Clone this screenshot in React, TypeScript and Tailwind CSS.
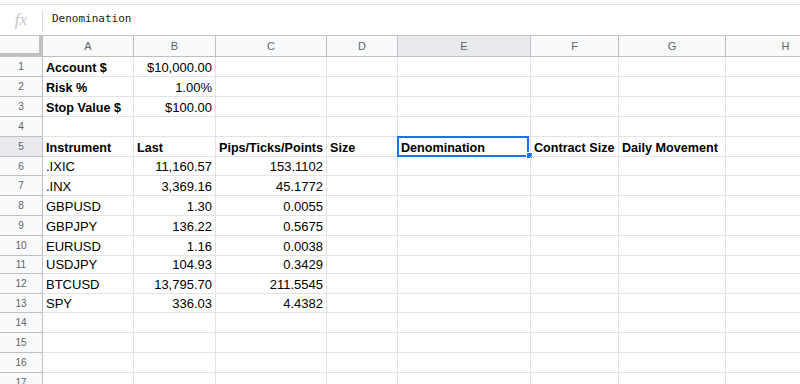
import React from "react";

const cols = [
  { key: "A", w: "w-[91px]" },
  { key: "B", w: "w-[82px]" },
  { key: "C", w: "w-[111px]" },
  { key: "D", w: "w-[71px]" },
  { key: "E", w: "w-[133px]" },
  { key: "F", w: "w-[88px]" },
  { key: "G", w: "w-[107px]" },
  { key: "H", w: "w-[120px]" },
];

type Cell = { v: string; bold?: boolean; right?: boolean };

const data: Record<number, Cell[]> = {
  1: [{ v: "Account $", bold: true }, { v: "$10,000.00", right: true }],
  2: [{ v: "Risk %", bold: true }, { v: "1.00%", right: true }],
  3: [{ v: "Stop Value $", bold: true }, { v: "$100.00", right: true }],
  5: [
    { v: "Instrument", bold: true },
    { v: "Last", bold: true },
    { v: "Pips/Ticks/Points", bold: true },
    { v: "Size", bold: true },
    { v: "Denomination", bold: true },
    { v: "Contract Size", bold: true },
    { v: "Daily Movement", bold: true },
  ],
  6: [{ v: ".IXIC" }, { v: "11,160.57", right: true }, { v: "153.1102", right: true }],
  7: [{ v: ".INX" }, { v: "3,369.16", right: true }, { v: "45.1772", right: true }],
  8: [{ v: "GBPUSD" }, { v: "1.30", right: true }, { v: "0.0055", right: true }],
  9: [{ v: "GBPJPY" }, { v: "136.22", right: true }, { v: "0.5675", right: true }],
  10: [{ v: "EURUSD" }, { v: "1.16", right: true }, { v: "0.0038", right: true }],
  11: [{ v: "USDJPY" }, { v: "104.93", right: true }, { v: "0.3429", right: true }],
  12: [{ v: "BTCUSD" }, { v: "13,795.70", right: true }, { v: "211.5545", right: true }],
  13: [{ v: "SPY" }, { v: "336.03", right: true }, { v: "4.4382", right: true }],
};

// row heights incl. bottom gridline
const heights: Record<number, string> = {
  6: "h-[19px]",
  11: "h-[18px]",
  13: "h-[19px]",
};

export default function App() {
  const rows = Array.from({ length: 18 }, (_, i) => i + 1);

  return (
    <div className="w-[800px] h-[384px] overflow-hidden bg-white font-['Liberation_Sans',Arial,sans-serif] text-black">
      {/* formula bar */}
      <div className="h-[35px] pt-[4px]">
        <div className="h-[31px] border-t border-[#e3e3e3] flex items-center">
          <div className="w-[42px] flex justify-center">
            <span className="font-['Liberation_Serif',serif] italic text-[17px] leading-none text-[#c4c4c4] -mt-[2px]">fx</span>
          </div>
          <div className="w-px h-[21px] bg-[#dadce0]" />
          <div className="pl-[9px] font-['DejaVu_Sans_Mono',monospace] text-[11px] text-[#222] -mt-[1px]">Denomination</div>
        </div>
      </div>

      {/* column headers */}
      <div className="flex h-[22px] border-t border-[#c0c0c0] bg-[#f8f9fa]">
        <div className="w-[43px] shrink-0 border-r-4 border-b-4 border-[#c0c0c0] bg-[#f8f9fa]" />
        {cols.map((c) => (
          <div
            key={c.key}
            className={`${c.w} shrink-0 border-r border-b border-[#c0c0c0] flex items-center justify-center text-[11px] text-[#5f6368] ${c.key === "E" ? "bg-[#e8eaed]" : ""}`}
          >
            {c.key}
          </div>
        ))}
      </div>

      {/* grid */}
      {rows.map((r) => {
        const cells = data[r] || [];
        return (
          <div key={r} className={`flex ${heights[r] || "h-[20px]"}`}>
            <div
              className={`w-[43px] shrink-0 border-r border-b border-[#c0c0c0] flex items-center justify-center text-[10px] text-[#5f6368] ${r === 5 ? "bg-[#e8eaed]" : "bg-[#f8f9fa]"}`}
            >
              {r}
            </div>
            {cols.map((c, ci) => {
              const cell = cells[ci];
              const selected = r === 5 && c.key === "E";
              return (
                <div
                  key={c.key}
                  className={`${c.w} shrink-0 relative border-r border-b border-[#e2e3e3] flex items-end px-[3px] leading-[16px] whitespace-nowrap ${cell?.right ? "justify-end" : "justify-start"} ${cell?.bold ? "font-bold text-[12.6px]" : "text-[13px]"}`}
                >
                  {cell?.v}
                  {selected && (
                    <>
                      <div className="absolute -left-[1px] -top-[1px] w-[132px] h-[21px] border-2 border-[#1a73e8]" />
                      <div className="absolute left-[128px] top-[15px] w-[7px] h-[7px] bg-[#1a73e8] border border-white" />
                    </>
                  )}
                </div>
              );
            })}
          </div>
        );
      })}
    </div>
  );
}
